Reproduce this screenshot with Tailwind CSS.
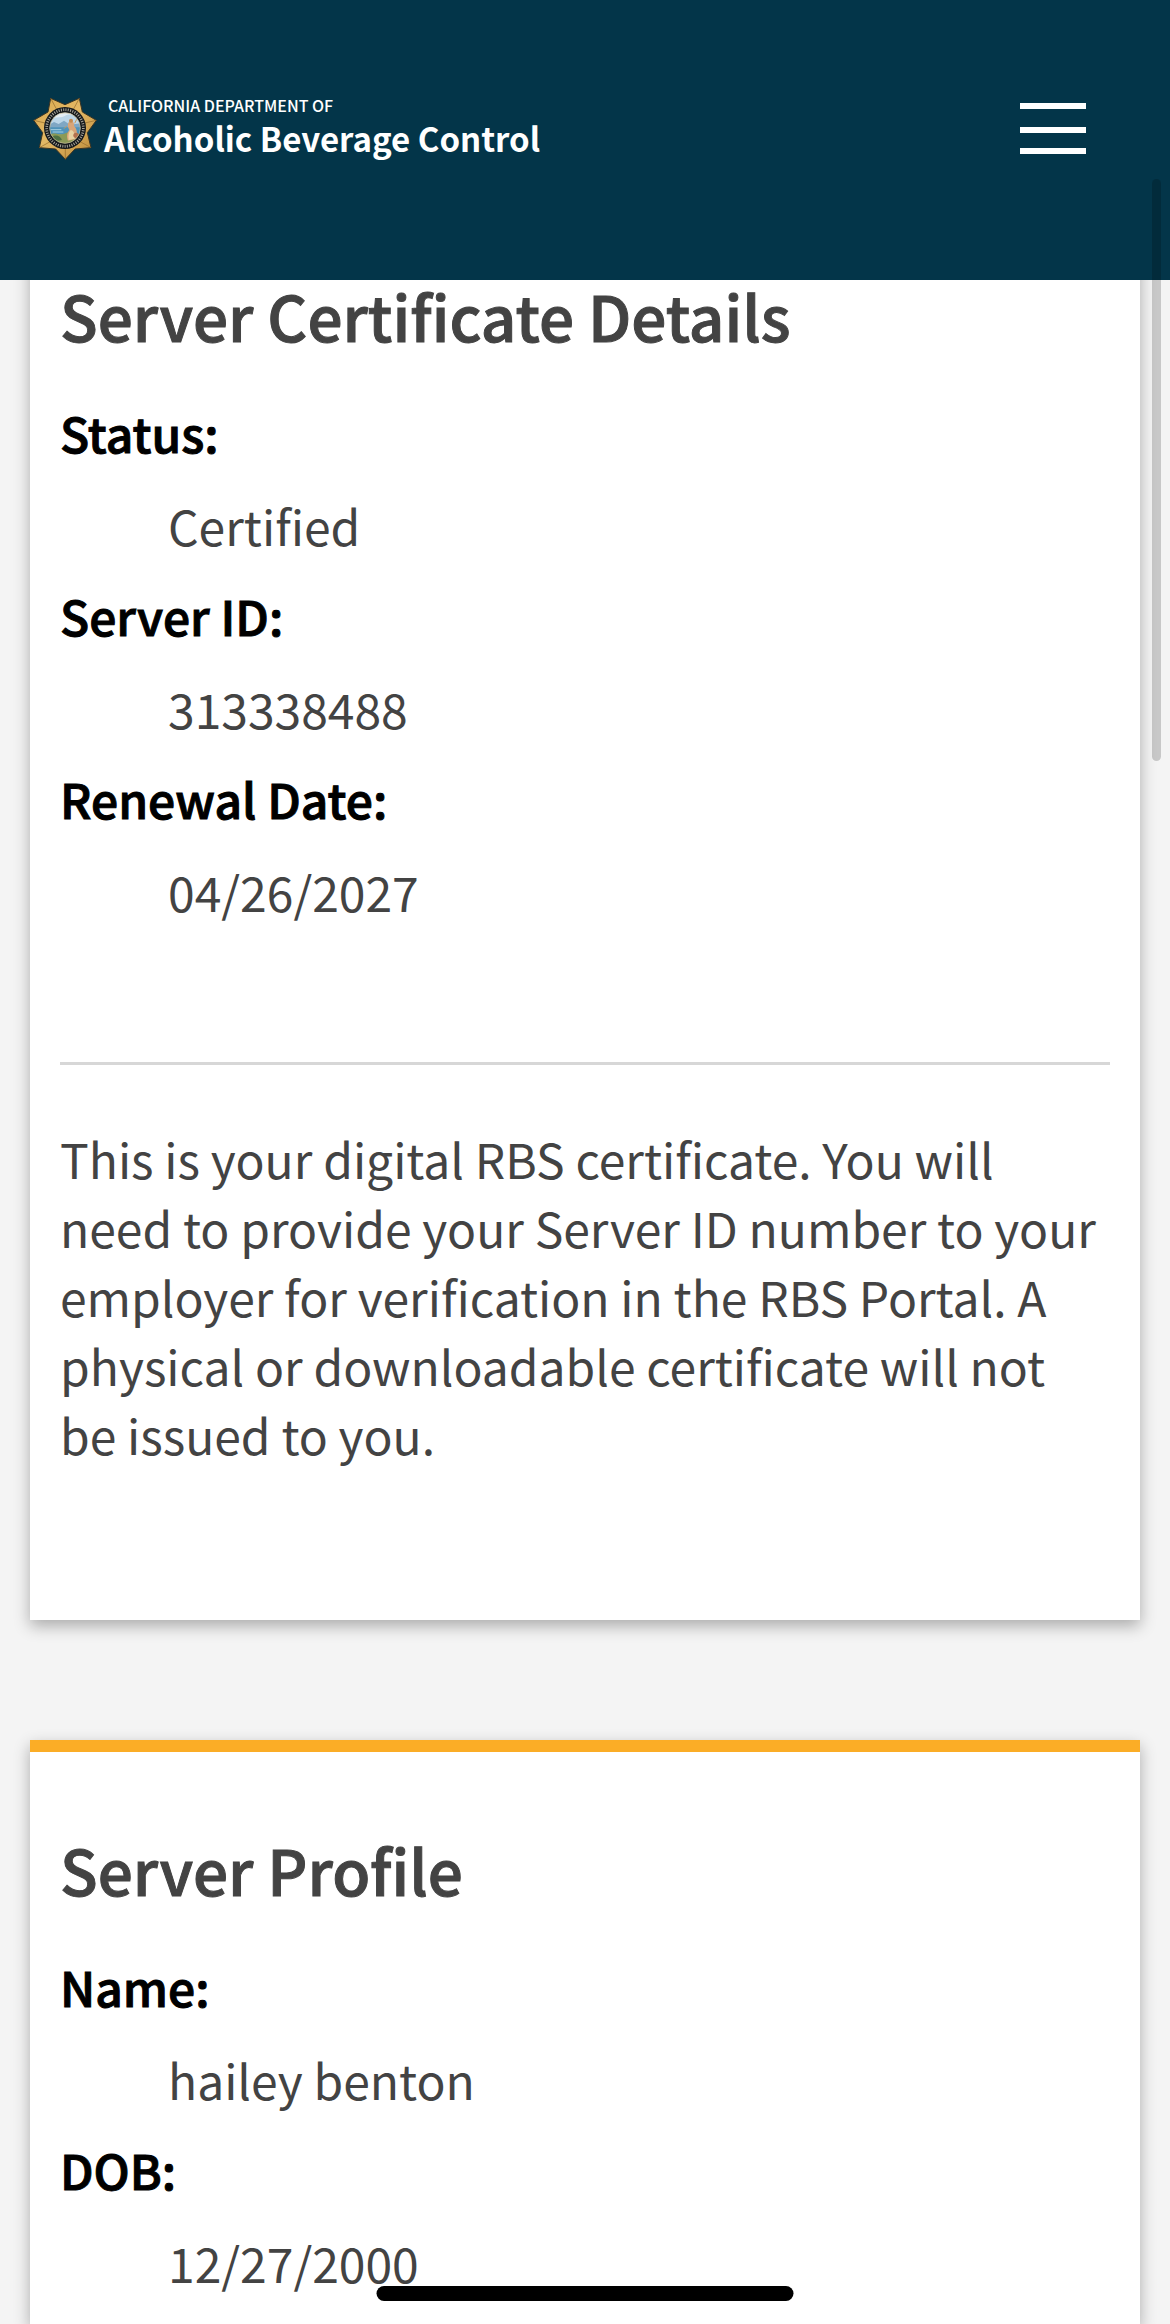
<!DOCTYPE html>
<html lang="en">
<head>
    <meta charset="UTF-8">
    <meta name="viewport" content="width=device-width, initial-scale=1.0">
    <title>Server Certificate - California Department of Alcoholic Beverage Control</title>
    <script src="https://cdn.jsdelivr.net/npm/@tailwindcss/browser@4"></script>
</head>
<body class="min-h-screen flex flex-col bg-[#f4f4f4] text-[#434343] font-['Noto_Sans_CJK_SC','Noto_Sans',sans-serif]">

    <!-- Fixed site header, content scrolls under it -->
    <header class="fixed inset-x-0 top-0 z-10 flex items-end justify-between bg-[#033549] pt-[94px] pb-[120px] pl-[33px] pr-[84px] text-white">
        <a href="#" class="flex items-start gap-[7px]">
            <svg class="w-16 h-[66px] shrink-0" viewBox="39 42 192 198" aria-hidden="true">
                <defs>
                    <linearGradient id="gold" x1="0" y1="0" x2="1" y2="1">
                        <stop offset="0" stop-color="#d9a94e"/>
                        <stop offset=".45" stop-color="#e3b865"/>
                        <stop offset="1" stop-color="#b98735"/>
                    </linearGradient>
                    <clipPath id="seal"><circle cx="135" cy="144" r="46"/></clipPath>
                </defs>
                <path d="M92 55 L135 74 L178 55 L187 96 L229 121 L202 158 L213 203 L165 207 L136 238 L107 207 L58 203 L68 158 L41 121 L84 96 Z" fill="url(#gold)" stroke="#3b3424" stroke-width="3" stroke-linejoin="round"/>
                <path d="M92 55 L112 92 M178 55 L158 92 M229 121 L190 130 M213 203 L175 182 M136 238 V200 M58 203 L96 182 M41 121 L80 130" stroke="#93692a" stroke-width="2"/>
                <circle cx="135" cy="144" r="63" fill="#15191c"/>
                <circle cx="135" cy="144" r="55" fill="none" stroke="#a9a59a" stroke-width="8" stroke-dasharray="3 4"/>
                <g clip-path="url(#seal)">
                    <rect x="88" y="96" width="94" height="96" fill="#bcd6e8"/>
                    <path d="M88 118 C104 108 120 116 134 108 S164 104 182 114 V96 H88Z" fill="#e4edf3"/>
                    <path d="M88 134 L102 126 L116 132 L132 122 L150 134 L182 130 V150 H88Z" fill="#7fa7c4"/>
                    <path d="M88 142 H182 V164 H88Z" fill="#4f93ba"/>
                    <path d="M92 149 H124 M98 156 H130" stroke="#a5cfe1" stroke-width="3"/>
                    <path d="M88 164 C104 154 120 168 136 160 S168 158 182 164 V192 H88Z" fill="#8b9a56"/>
                    <path d="M96 170 C108 162 122 168 126 180 L104 184Z" fill="#4e7144"/>
                    <path d="M148 124 C156 118 164 128 162 138 C172 146 172 164 170 176 L144 182 C138 168 142 158 148 150 C142 140 142 130 148 124Z" fill="#d8a578"/>
                    <path d="M152 150 C160 150 166 162 164 176 L146 180 C144 168 146 156 152 150Z" fill="#e8d3a2"/>
                    <circle cx="153" cy="122" r="6" fill="#c58a50"/>
                    <circle cx="168" cy="166" r="8" fill="#b3714f"/>
                    <path d="M140 138 L132 146 M164 130 L170 118" stroke="#c99a55" stroke-width="3"/>
                </g>
                <circle cx="135" cy="144" r="46" fill="none" stroke="#c5b78c" stroke-width="2"/>
            </svg>
            <span class="flex flex-col">
                <span class="pl-1 text-[16px] leading-[22px] font-medium">CALIFORNIA DEPARTMENT OF</span>
                <span class="text-[33px] leading-[44px] font-bold">Alcoholic Beverage Control</span>
            </span>
        </a>
        <button type="button" aria-label="Menu">
            <svg class="block w-[66px] h-[57px]" viewBox="0 0 66 57" fill="currentColor" shape-rendering="crispEdges" aria-hidden="true">
                <rect width="66" height="6"/>
                <rect y="24" width="66" height="6"/>
                <rect y="45" width="66" height="6"/>
            </svg>
        </button>
    </header>

    <main class="flex-1 flex flex-col gap-[120px] px-[30px] pt-[186px]">
        <section class="border-t-[12px] border-[#fbad26] bg-white px-[30px] pt-[77px] pb-[151px] shadow-[0_6px_15px_rgba(0,0,0,0.3)]">
            <h2 class="text-[62px] leading-[80px] font-medium [-webkit-text-stroke:1px]">Server Certificate Details</h2>
            <dl class="mt-[43px] text-[48px] leading-[69px]">
                <dt class="font-medium text-black [-webkit-text-stroke:1px]">Status:</dt>
                <dd class="mt-[24px] mb-[21px] ml-[108px]">Certified</dd>
                <dt class="font-medium text-black [-webkit-text-stroke:1px]">Server ID:</dt>
                <dd class="mt-[24px] mb-[21px] ml-[108px]">313338488</dd>
                <dt class="font-medium text-black [-webkit-text-stroke:1px]">Renewal Date:</dt>
                <dd class="mt-[24px] ml-[108px]">04/26/2027</dd>
            </dl>
            <hr class="mt-[136px] mb-[59px] border-t-[3px] border-[#d7d7d7]">
            <p class="text-[48px] leading-[69px]">This is your digital RBS certificate. You will need to provide your Server ID number to your employer for verification in the RBS Portal. A physical or downloadable certificate will not be issued to you.</p>
        </section>

        <section class="flex-1 border-t-[12px] border-[#fbad26] bg-white px-[30px] pt-[77px] pb-6 shadow-[0_6px_15px_rgba(0,0,0,0.3)]">
            <h2 class="text-[62px] leading-[80px] font-medium [-webkit-text-stroke:1px]">Server Profile</h2>
            <dl class="mt-[43px] text-[48px] leading-[69px]">
                <dt class="font-medium text-black [-webkit-text-stroke:1px]">Name:</dt>
                <dd class="mt-[24px] mb-[21px] ml-[108px]">hailey benton</dd>
                <dt class="font-medium text-black [-webkit-text-stroke:1px]">DOB:</dt>
                <dd class="mt-[24px] ml-[108px]">12/27/2000</dd>
            </dl>
        </section>
    </main>

    <!-- Scroll thumb and home indicator -->
    <div class="fixed right-[9px] top-[179px] z-20 h-[582px] w-[9px] rounded-full bg-black/18"></div>
    <div class="fixed bottom-[23px] left-1/2 z-20 h-[15px] w-[417px] -translate-x-1/2 rounded-full bg-black"></div>

</body>
</html>
